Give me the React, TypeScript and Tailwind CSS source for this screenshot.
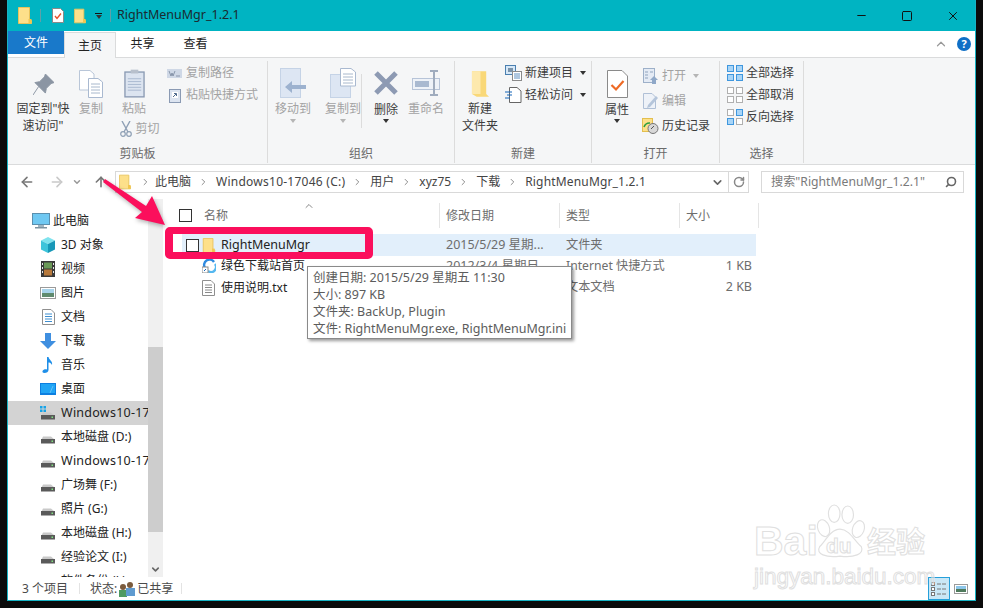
import React from 'react';
import { ChevronDown, ChevronUp, ArrowLeft, ArrowRight, ArrowUp, RotateCw, Search, Minus, Square, X } from 'lucide-react';

const Folder = ({ className = 'w-[14px] h-[17px]' }: { className?: string }) => (
  <svg viewBox="0 0 14 17" className={className}>
    <path d="M0.5 0.5H11.5V13.5H13.5V16.5H0.5Z" fill="#fde08a" stroke="#e8c35a" />
    <rect x="10.5" y="12" width="3" height="4.5" fill="#f2c64e" />
  </svg>
);

const Drive = ({ win }: { win?: boolean }) => (
  <svg viewBox="0 0 16 14" className="w-4 h-[14px] shrink-0">
    {win && (
      <g fill="#16a3e8">
        <rect x="0" y="0" width="2.5" height="2.5" />
        <rect x="3.5" y="0" width="2.5" height="2.5" />
        <rect x="0" y="3.5" width="2.5" height="2.5" />
        <rect x="3.5" y="3.5" width="2.5" height="2.5" />
      </g>
    )}
    <path d="M3 6.5H11L14.5 9.5H1.5Z" fill="#c9c9c9" />
    <rect x="1" y="9" width="14" height="4.5" fill="#5a5a5a" />
    <rect x="11.5" y="10.5" width="1.5" height="1.5" fill="#7fe07f" />
  </svg>
);

const PcIcon = () => (
  <svg viewBox="0 0 18 16" className="w-[18px] h-4 shrink-0">
    <rect x="0.5" y="0.5" width="17" height="11" fill="#6fc8f2" stroke="#5a8fae" />
    <rect x="6" y="12" width="6" height="2" fill="#9fb4c0" />
    <rect x="3" y="14" width="12" height="1.5" fill="#7c93a1" />
  </svg>
);

const CubeIcon = () => (
  <svg viewBox="0 0 16 16" className="w-4 h-4 shrink-0">
    <path d="M8 0L15 3.5L8 7L1 3.5Z" fill="#7fe3ee" />
    <path d="M1 3.5L8 7V16L1 12.5Z" fill="#3ec4da" />
    <path d="M15 3.5L8 7V16L15 12.5Z" fill="#1898b8" />
  </svg>
);

const VideoIcon = () => (
  <svg viewBox="0 0 14 16" className="w-4 h-4 shrink-0">
    <rect x="0" y="0" width="14" height="16" fill="#3a3a3a" />
    <rect x="3" y="1.5" width="8" height="6" fill="#6b9a58" />
    <rect x="3" y="8.5" width="8" height="6" fill="#b7793c" />
    <g fill="#e8e8e8">
      <rect x="1" y="2" width="1" height="2" />
      <rect x="1" y="6" width="1" height="2" />
      <rect x="1" y="10" width="1" height="2" />
      <rect x="12" y="2" width="1" height="2" />
      <rect x="12" y="6" width="1" height="2" />
      <rect x="12" y="10" width="1" height="2" />
    </g>
  </svg>
);

const PicIcon = () => (
  <svg viewBox="0 0 16 12" className="w-4 h-3 shrink-0">
    <rect x="0.5" y="0.5" width="15" height="11" fill="#fff" stroke="#9a9a9a" />
    <rect x="2" y="2" width="12" height="4" fill="#a7d3ea" />
    <rect x="2" y="6" width="12" height="4" fill="#5f8a6e" />
  </svg>
);

const DocIcon = ({ lines = '#8a8a8a' }: { lines?: string }) => (
  <svg viewBox="0 0 13 16" className="w-[13px] h-4 shrink-0">
    <path d="M0.5 0.5H9L12.5 4V15.5H0.5Z" fill="#fff" stroke="#8f8f8f" />
    <path d="M3 5H10M3 7.5H10M3 10H10M3 12.5H10" stroke={lines} />
  </svg>
);

const DownIcon = () => (
  <svg viewBox="0 0 16 16" className="w-4 h-4 shrink-0">
    <path d="M5 0H11V8H16L8 16L0 8H5Z" fill="#3f8fe0" />
  </svg>
);

const NoteIcon = () => (
  <svg viewBox="0 0 12 16" className="w-4 h-4 shrink-0">
    <path d="M5 0H6.5C7 3 11 4 10 8C9 6 7.5 5.5 6.5 5.5V13C6.5 15 4.5 16 2.5 16C0.5 16 0 14.5 0.8 13.5C2 12 4 12 5 12.5Z" fill="#1f8fe8" />
  </svg>
);

const DesktopIcon = () => (
  <svg viewBox="0 0 16 12" className="w-4 h-3 shrink-0">
    <rect x="0" y="0" width="16" height="12" fill="#0d7fe0" />
    <rect x="1" y="1" width="14" height="9" fill="#21a5f5" />
    <path d="M10 10L13 3" stroke="#8fd3fa" strokeWidth="0.6" />
  </svg>
);

const Grid = ({ on }: { on: boolean[] }) => (
  <svg viewBox="0 0 16 16" className="w-4 h-4 shrink-0">
    {[[0, 0], [9, 0], [0, 9], [9, 9]].map(([x, y], i) => (
      <rect
        key={i}
        x={x + 0.5}
        y={y + 0.5}
        width="6"
        height="6"
        fill={on[i] ? '#a9d5f7' : '#fff'}
        stroke={on[i] ? '#3f97de' : '#b0b0b0'}
      />
    ))}
  </svg>
);

const Caret = ({ gray }: { gray?: boolean }) => (
  <span className={`inline-block border-x-[3.5px] border-t-[4px] border-x-transparent ${gray ? 'border-t-[#b5b5b5]' : 'border-t-[#333]'}`} />
);

const BigBtn = ({ w, icon, label, gray, caret, low }: { w: string; icon: React.ReactNode; label: React.ReactNode; gray?: boolean; caret?: boolean; low?: boolean }) => (
  <div className={`flex flex-col items-center shrink-0 ${w} ${gray ? 'text-[#a3a3a3]' : 'text-[#3c3c3c]'}`}>
    <div className="h-[33px] flex items-end justify-center">{icon}</div>
    <div className={`text-center leading-[17px] ${low ? 'mt-[3px]' : 'mt-[2px]'}`}>{label}</div>
    {caret && <div className={`leading-none flex items-center ${low ? 'h-[6px]' : 'h-2'}`}><Caret gray={gray} /></div>}
  </div>
);

const SmallBtn = ({ icon, label, gray, caret }: { icon: React.ReactNode; label: string; gray?: boolean; caret?: boolean }) => (
  <div className={`flex items-center gap-[3px] h-[22px] whitespace-nowrap ${gray ? 'text-[#a3a3a3]' : 'text-[#3c3c3c]'}`}>
    <span className="w-[17px] flex justify-center shrink-0">{icon}</span>
    <span>{label}</span>
    {caret && <span className="ml-[4px] flex"><Caret gray={gray} /></span>}
  </div>
);

const Group = ({ w, label, children }: { w: string; label: string; children: React.ReactNode }) => (
  <div className={`${w} shrink-0 h-[102px] my-[3px] border-r border-[#dcdcdc] flex flex-col`}>
    <div className="h-[84px] flex pt-[4px]">{children}</div>
    <div className="text-center text-[#6a6a6a] leading-[16px] mt-[1px]">{label}</div>
  </div>
);

const navItems: { icon: React.ReactNode; label: string; sel?: boolean; wide?: boolean }[] = [
  { icon: <CubeIcon />, label: '3D 对象' },
  { icon: <VideoIcon />, label: '视频' },
  { icon: <PicIcon />, label: '图片' },
  { icon: <DocIcon lines="#3f8fd0" />, label: '文档' },
  { icon: <DownIcon />, label: '下载' },
  { icon: <NoteIcon />, label: '音乐' },
  { icon: <DesktopIcon />, label: '桌面' },
  { icon: <Drive win />, label: 'Windows10-17046 (C:)', sel: true, wide: true },
  { icon: <Drive />, label: '本地磁盘 (D:)' },
  { icon: <Drive />, label: 'Windows10-17046 (E:)', wide: true },
  { icon: <Drive />, label: '广场舞 (F:)' },
  { icon: <Drive />, label: '照片 (G:)' },
  { icon: <Drive />, label: '本地磁盘 (H:)' },
  { icon: <Drive />, label: '经验论文 (I:)' },
  { icon: <Drive />, label: '软件备份 (J:)' },
];

const CrumbSep = () => (
  <svg viewBox="0 0 6 8" className="w-[5px] h-2 mx-[10px] shrink-0"><path d="M1 0.5L4.5 4L1 7.5" fill="none" stroke="#777" /></svg>
);

const Crumb = ({ children, wide }: { children: string; wide?: boolean }) => (
  <>
    <span className={`text-[#444] ${wide ? 'tracking-[0.25px]' : ''}`}>{children}</span>
    <CrumbSep />
  </>
);

const Cols = ({ name, date, type, size }: { name: React.ReactNode; date?: string; type?: string; size?: string }) => (
  <>
    <div className="w-[258px] shrink-0 flex items-center">{name}</div>
    <div className="w-[120px] shrink-0 pl-[6px] text-[12.5px] text-[#6d6d6d] whitespace-nowrap overflow-hidden">{date}</div>
    <div className="w-[120px] shrink-0 pl-[6px] text-[12.2px] text-[#6d6d6d] whitespace-nowrap">{type}</div>
    <div className="w-[76px] shrink-0 pr-[4px] text-[12.5px] text-right text-[#6d6d6d]">{size}</div>
  </>
);

export default function App() {
  return (
    <div className="relative w-[983px] h-[608px] overflow-hidden bg-[#0b0b0b] pl-[7px] font-['Noto_Sans','Noto_Sans_CJK_SC',sans-serif] text-[12px] text-[#222]">
      <div className="w-[969px] h-[601px] border-x border-b border-[#17b3c4] bg-white flex flex-col">
        {/* Title bar */}
        <div className="h-[31px] shrink-0 bg-[#00b4c2] flex items-center pl-[10px] text-[#1b2a30]">
          <Folder />
          <span className="w-px h-[13px] bg-[#5fa0a8] ml-[8px] mr-[11px]" />
          <svg viewBox="0 0 12 15" className="w-3 h-[15px]">
            <path d="M0.5 0.5H8.5L11.5 3.5V14.5H0.5Z" fill="#fff" stroke="#8a8a8a" />
            <path d="M3 8L5 10.5L9 5.5" fill="none" stroke="#e8502a" strokeWidth="1.4" />
          </svg>
          <span className="ml-[10px]"><Folder className="w-3 h-4" /></span>
          <span className="ml-[9px] flex flex-col items-center gap-[1px]">
            <span className="w-[7px] h-px bg-[#111]" />
            <Caret />
          </span>
          <span className="w-px h-[13px] bg-[#5fa0a8] ml-[8px] mr-[6px]" />
          <span className="text-[12.5px]">RightMenuMgr_1.2.1</span>
          <div className="ml-auto flex items-center text-[#111]">
            <Minus size={13} strokeWidth={1} absoluteStrokeWidth className="mr-[33px]" />
            <Square size={12} strokeWidth={1} absoluteStrokeWidth className="mr-[33px]" />
            <X size={14} strokeWidth={1} absoluteStrokeWidth className="mr-[15px]" />
          </div>
        </div>

        {/* Tabs */}
        <div className="h-[26px] shrink-0 flex items-stretch relative">
          <div className="w-[56px] h-[23px] bg-[#1979ca] text-white flex items-center justify-center">文件</div>
          <div className="w-[52px] h-[26px] mt-[1px] z-10 bg-[#f5f6f7] border-x border-t border-[#dadbdc] flex items-center justify-center">主页</div>
          <div className="w-[53px] flex items-center justify-center">共享</div>
          <div className="w-[53px] flex items-center justify-center">查看</div>
          <div className="ml-auto flex items-center gap-[9px] pr-[4px]">
            <ChevronUp size={14} strokeWidth={1.2} absoluteStrokeWidth className="text-[#999]" />
            <span className="w-[14px] h-[14px] rounded-full bg-[#0f6fc6] text-white font-bold text-[11px] flex items-center justify-center">?</span>
          </div>
        </div>

        {/* Ribbon */}
        <div className="h-[108px] shrink-0 bg-[#f5f6f7] border-y border-[#dadbdc] flex whitespace-nowrap">
          <Group w="w-[260px]" label="剪贴板">
            <BigBtn
              w="w-[70px]"
              label={<>固定到"快<br />速访问"</>}
              icon={
                <svg viewBox="0 0 22 22" className="w-[21px] h-[21px] mb-[3px]">
                  <path d="M13 0L22 9L19 10L14 15L13 20L2 9L7 8L12 3Z M6 13L0 22" fill="#8b95a3" stroke="#8b95a3" />
                </svg>
              }
            />
            <div className="w-[36px] shrink-0 -ml-[5px]">
              <BigBtn
                w="w-[36px]"
                gray
                label="复制"
                icon={
                  <svg viewBox="0 0 24 28" className="w-6 h-[28px]">
                    <path d="M0.5 0.5H11L15 4V20H0.5Z" fill="#fff" stroke="#b9c6d8" />
                    <path d="M9.5 8.5H19L23.5 12V27.5H9.5Z" fill="#fff" stroke="#a9b9d0" />
                    <path d="M12 14H21M12 17H21M12 20H21M12 23H21" stroke="#a8b8cc" />
                  </svg>
                }
              />
            </div>
            <div className="w-[48px] shrink-0 ml-[1px] flex flex-col items-center text-[#a3a3a3]">
              <BigBtn
                w="w-[48px]"
                gray
                label="粘贴"
                icon={
                  <svg viewBox="0 0 22 30" className="w-[21px] h-[29px]">
                    <rect x="1" y="3" width="20" height="26" fill="#dce4f0" stroke="#8a9ab3" strokeWidth="1.4" />
                    <rect x="7" y="0.5" width="8" height="4" fill="#b8c0cc" />
                    <path d="M4 10H18M4 13H18M4 16H18M4 19H18M4 22H18" stroke="#a9b9d0" />
                  </svg>
                }
              />
              <div className="flex items-center gap-[4px] mt-[3px] ml-[11px] h-[18px]">
                <svg viewBox="0 0 12 16" className="w-3 h-4 shrink-0">
                  <path d="M2 0L8 11M10 0L4 11" stroke="#8fa0b5" strokeWidth="1.4" />
                  <circle cx="3" cy="13" r="2.3" fill="none" stroke="#8fa0b5" strokeWidth="1.2" />
                  <circle cx="9" cy="13" r="2.3" fill="none" stroke="#8fa0b5" strokeWidth="1.2" />
                </svg>
                <span>剪切</span>
              </div>
            </div>
            <div className="ml-[8px] -mt-[3px] flex flex-col">
              <SmallBtn
                gray
                label="复制路径"
                icon={
                  <svg viewBox="0 0 15 9" className="w-[15px] h-[9px]">
                    <rect x="0" y="0" width="15" height="9" fill="#cfd8e6" />
                    <path d="M2 2L4 7L5 4L6 7L8 2M9 7H13" stroke="#6a7a90" strokeWidth="0.7" fill="none" />
                  </svg>
                }
              />
              <SmallBtn
                gray
                label="粘贴快捷方式"
                icon={
                  <svg viewBox="0 0 12 15" className="w-3 h-[15px]">
                    <rect x="0.5" y="1.5" width="11" height="13" fill="#dce4f0" stroke="#8a9ab3" />
                    <rect x="3" y="4" width="6" height="6" fill="#fff" />
                    <path d="M4 9L7 6M5 5.5H7.5V8" stroke="#4f6a8c" fill="none" />
                  </svg>
                }
              />
            </div>
          </Group>

          <Group w="w-[187px]" label="组织">
            <div className="w-[5px] shrink-0" />
            <BigBtn
              w="w-[40px]"
              gray
              caret
              label="移动到"
              icon={
                <svg viewBox="0 0 26 30" className="w-[26px] h-[30px]">
                  <rect x="0.5" y="0.5" width="20" height="29" fill="#dde6f3" stroke="#c5d3e6" />
                  <path d="M5 19L12 13V17H26V21H12V25Z" fill="#9db2cf" />
                </svg>
              }
            />
            <div className="w-[10px] shrink-0" />
            <BigBtn
              w="w-[40px]"
              gray
              caret
              label="复制到"
              icon={
                <svg viewBox="0 0 26 30" className="w-[26px] h-[30px]">
                  <rect x="0.5" y="6.5" width="20" height="23" fill="#dde6f3" stroke="#c5d3e6" />
                  <path d="M10.5 0.5H21L25.5 4V18H10.5Z" fill="#fff" stroke="#a9b9d0" />
                  <path d="M13 6H23M13 9H23M13 12H23M13 15H23" stroke="#a8b8cc" />
                </svg>
              }
            />
            <div className="w-px h-[54px] bg-[#dcdcdc] mt-[9px] -ml-[2px] mr-[6px]" />
            <BigBtn
              w="w-[36px]"
              caret
              low
              label="删除"
              icon={
                <svg viewBox="0 0 26 26" className="w-[26px] h-[26px] mb-[2px]">
                  <path d="M3 3L23 23M23 3L3 23" stroke="#8d9ab3" strokeWidth="5" />
                </svg>
              }
            />
            <BigBtn
              w="w-[44px]"
              gray
              label="重命名"
              icon={
                <svg viewBox="0 0 28 26" className="w-7 h-[26px] mb-[2px]">
                  <rect x="0.5" y="8.5" width="27" height="11" fill="#eef2f8" stroke="#b7c4d8" />
                  <rect x="3" y="11" width="14" height="6" fill="#a9b9d0" />
                  <path d="M18 1H26M22 1V25M18 25H26" stroke="#a0acbe" strokeWidth="2" fill="none" />
                </svg>
              }
            />
          </Group>

          <Group w="w-[137px]" label="新建">
            <BigBtn
              w="w-[50px]"
              label={<>新建<br />文件夹</>}
              icon={
                <svg viewBox="0 0 20 28" className="w-[19px] h-[27px]">
                  <path d="M1 0H16V24L19 27H6L1 24Z" fill="#f9d878" />
                  <path d="M1 0H10V24L1 24Z" fill="#fde9ad" />
                </svg>
              }
            />
            <div className="-mt-[3px] flex flex-col">
              <SmallBtn
                caret
                label="新建项目"
                icon={
                  <svg viewBox="0 0 17 16" className="w-[17px] h-4">
                    <rect x="0.5" y="0.5" width="10" height="9" fill="#d6e8f8" stroke="#4a7fb0" />
                    <rect x="3" y="3" width="5" height="4" fill="#7a93aa" />
                    <rect x="7.5" y="6.5" width="9" height="9" fill="#fff" stroke="#8a8a8a" />
                    <path d="M9 9H15M9 11H15M9 13H15" stroke="#5f8fc0" />
                  </svg>
                }
              />
              <SmallBtn
                caret
                label="轻松访问"
                icon={
                  <svg viewBox="0 0 17 16" className="w-[17px] h-4">
                    <path d="M4.5 0.5H12L16 4V15.5H4.5Z" fill="#fff" stroke="#666" />
                    <path d="M0 5H7M2 8H7M0 11H5" stroke="#1565b8" strokeWidth="1.2" />
                  </svg>
                }
              />
            </div>
          </Group>

          <Group w="w-[128px]" label="打开">
            <BigBtn
              w="w-[50px]"
              caret
              low
              label="属性"
              icon={
                <svg viewBox="0 0 21 28" className="w-[21px] h-[28px]">
                  <path d="M0.5 0.5H15L20.5 6V27.5H0.5Z" fill="#fff" stroke="#8a8a8a" />
                  <path d="M4.5 15L9 19.5L16.5 11" fill="none" stroke="#ee6a25" strokeWidth="2.2" />
                </svg>
              }
            />
            <div className="-mt-[2px] flex flex-col">
              <div className="h-[25px] flex items-center">
                <SmallBtn
                  gray
                  caret
                  label="打开"
                  icon={
                    <svg viewBox="0 0 15 16" className="w-[15px] h-4">
                      <rect x="0.5" y="0.5" width="11" height="14" fill="#e4ebf5" stroke="#9db0c9" />
                      <path d="M2 4H5M7 4H10M2 7H5M2 10H5" stroke="#8fa3bd" />
                      <path d="M11 8L15 12H13V16H9V12H7Z" fill="#8fa8c8" />
                    </svg>
                  }
                />
              </div>
              <div className="h-[25px] flex items-center">
                <SmallBtn
                  gray
                  label="编辑"
                  icon={
                    <svg viewBox="0 0 15 16" className="w-[15px] h-4">
                      <path d="M0.5 0.5H9L12.5 4V15.5H0.5Z" fill="#eef2f8" stroke="#b0c0d6" />
                      <path d="M5 12L13 3L15 5L7 14L4 15Z" fill="#b5c5da" />
                    </svg>
                  }
                />
              </div>
              <div className="h-[25px] flex items-center">
                <SmallBtn
                  label="历史记录"
                  icon={
                    <svg viewBox="0 0 17 16" className="w-[17px] h-4">
                      <rect x="0.5" y="0.5" width="10" height="13" fill="#fde08a" stroke="#e3bf4f" />
                      <circle cx="11" cy="10.5" r="5" fill="#d8d8d8" stroke="#777" />
                      <path d="M2 9A6 6 0 0 1 8 5" fill="none" stroke="#2e9e3f" strokeWidth="1.6" />
                      <path d="M9 11L12 8" stroke="#555" />
                    </svg>
                  }
                />
              </div>
            </div>
          </Group>

          <Group w="w-[84px]" label="选择">
            <div className="ml-[6px] -mt-[3px] flex flex-col">
              <SmallBtn label="全部选择" icon={<Grid on={[true, true, true, true]} />} />
              <SmallBtn label="全部取消" icon={<Grid on={[false, false, false, false]} />} />
              <SmallBtn label="反向选择" icon={<Grid on={[false, true, true, false]} />} />
            </div>
          </Group>
        </div>

        {/* Address bar */}
        <div className="h-[34px] shrink-0 flex items-center whitespace-nowrap">
          <div className="w-[107px] shrink-0 flex items-center pl-[11px]">
            <ArrowLeft size={16} strokeWidth={1.6} absoluteStrokeWidth className="text-[#777]" />
            <ArrowRight size={16} strokeWidth={1.6} absoluteStrokeWidth className="ml-[14px] text-[#c9c9c9]" />
            <ChevronDown size={10} strokeWidth={1.5} absoluteStrokeWidth className="ml-[7px] text-[#999]" />
            <ArrowUp size={16} strokeWidth={1.6} absoluteStrokeWidth className="ml-[11px] text-[#777]" />
          </div>
          <div className="w-[634px] h-[22px] shrink-0 border border-[#d9d9d9] flex items-center">
            <div className="pl-[3px] w-[24px] shrink-0"><Folder className="w-3 h-4" /></div>
            <svg viewBox="0 0 6 8" className="w-[5px] h-2 ml-[3px] mr-[7px] shrink-0"><path d="M1 0.5L4.5 4L1 7.5" fill="none" stroke="#777" /></svg>
            <Crumb>此电脑</Crumb>
            <Crumb wide>Windows10-17046 (C:)</Crumb>
            <Crumb>用户</Crumb>
            <Crumb>xyz75</Crumb>
            <Crumb>下载</Crumb>
            <span className="text-[#444] tracking-[0.17px]">RightMenuMgr_1.2.1</span>
            <ChevronDown size={13} strokeWidth={1.6} absoluteStrokeWidth className="ml-auto mr-[4px] text-[#666]" />
            <div className="w-[20px] h-full border-l border-[#d9d9d9] flex items-center justify-center">
              <RotateCw size={12} strokeWidth={1.5} absoluteStrokeWidth className="text-[#888]" />
            </div>
          </div>
          <div className="ml-[12px] w-[203px] h-[22px] shrink-0 border border-[#d9d9d9] flex items-center pl-[9px] pr-[6px] text-[12.2px] text-[#7a7a7a]">
            <span>搜索"RightMenuMgr_1.2.1"</span>
            <Search size={12} strokeWidth={1.6} absoluteStrokeWidth className="ml-auto text-[#666] -scale-x-100" />
          </div>
        </div>

        {/* Main */}
        <div className="flex-1 min-h-0 flex">
          <div className="w-[140px] shrink-0 overflow-hidden whitespace-nowrap pt-[10px]">
            <div className="h-[24px] flex items-center pl-[24px] gap-[3px]">
              <PcIcon />
              <span>此电脑</span>
            </div>
            {navItems.map((it, i) => (
              <div key={i} className={`h-[24px] flex items-center pl-[32px] ${it.sel ? 'bg-[#d3d3d3]' : ''}`}>
                <span className="w-[16px] flex justify-center shrink-0">{it.icon}</span>
                <span className={`ml-[5px] ${it.wide ? 'text-[12.5px] tracking-[0.25px]' : ''}`}>{it.label}</span>
              </div>
            ))}
          </div>

          {/* Scrollbar */}
          <div className="w-[15px] shrink-0 bg-[#f0f0f0] flex flex-col">
            <div className="h-[148px]" />
            <div className="h-[185px] bg-[#cdcdcd]" />
            <div className="flex-1 flex items-end justify-center pb-[2px]">
              <ChevronDown size={11} strokeWidth={1.6} absoluteStrokeWidth className="text-[#666]" />
            </div>
          </div>

          {/* File list */}
          <div className="flex-1 min-w-0 pl-[3px] pt-[4px] whitespace-nowrap">
            <div className="h-[25px] flex items-center text-[#6d6d6d]">
              <div className="w-[273px] shrink-0 flex items-center pl-[13px] relative">
                <span className="w-[13px] h-[13px] border border-[#333] bg-white" />
                <span className="ml-[12px]">名称</span>
                <ChevronUp size={12} strokeWidth={1} absoluteStrokeWidth className="absolute left-[137px] -top-[7px] text-[#888]" />
              </div>
              <div className="w-[120px] h-full shrink-0 pl-[6px] border-l border-[#e5e5e5] flex items-center">修改日期</div>
              <div className="w-[120px] h-full shrink-0 pl-[6px] border-l border-[#e5e5e5] flex items-center">类型</div>
              <div className="w-[80px] h-full shrink-0 pl-[6px] border-x border-[#e5e5e5] flex items-center">大小</div>
            </div>
            <div className="ml-[16px] mt-[6px] w-[574px] h-[22px] bg-[#e2effb] flex items-center">
              <Cols
                name={
                  <>
                    <span className="ml-[4px] w-[13px] h-[13px] border border-[#333] bg-white shrink-0" />
                    <span className="ml-[3px] flex"><Folder className="w-[14px] h-[15px]" /></span>
                    <span className="ml-[5px] text-[12.5px] text-[#222]">RightMenuMgr</span>
                  </>
                }
                date="2015/5/29 星期..."
                type="文件夹"
              />
            </div>
            <div className="ml-[16px] w-[574px] h-[20px] flex items-center">
              <Cols
                name={
                  <>
                    <svg viewBox="0 0 14 14" className="ml-[20px] w-[14px] h-[14px] shrink-0">
                      <path d="M3 9A5 5 0 0 1 12 3" fill="none" stroke="#2f8ae0" strokeWidth="2.4" />
                      <path d="M13 5A5 5 0 0 1 6 12" fill="none" stroke="#55b8f0" strokeWidth="2.4" />
                      <rect x="0" y="8" width="6" height="6" fill="#fff" stroke="#8a8a8a" />
                      <path d="M2 12L4 10" stroke="#1565b8" />
                    </svg>
                    <span className="ml-[5px]">绿色下载站首页</span>
                  </>
                }
                date="2012/3/4 星期日..."
                type="Internet 快捷方式"
                size="1 KB"
              />
            </div>
            <div className="ml-[16px] mt-px w-[574px] h-[21px] flex items-center">
              <Cols
                name={
                  <>
                    <span className="ml-[20px] flex"><DocIcon /></span>
                    <span className="ml-[6px]">使用说明.txt</span>
                  </>
                }
                type="文本文档"
                size="2 KB"
              />
            </div>
          </div>
        </div>

        {/* Status bar */}
        <div className="h-[23px] shrink-0 flex items-center text-[#4a4a4a] relative whitespace-nowrap bg-white">
          <span className="ml-[14px] w-[57px]">3 个项目</span>
          <span className="w-px h-[11px] bg-[#e3e3e3]" />
          <span className="ml-[10px]">状态:</span>
          <svg viewBox="0 0 17 16" className="w-[17px] h-4 ml-[1px] shrink-0">
            <circle cx="5" cy="6" r="3" fill="#7a5a3c" />
            <rect x="1" y="9" width="8" height="7" fill="#4f9a62" />
            <circle cx="12" cy="4" r="3" fill="#7a5a3c" />
            <rect x="8" y="7" width="9" height="8" fill="#5f9bd0" />
          </svg>
          <span className="ml-[2px]">已共享</span>
          <span className="ml-[8px] w-px h-[11px] bg-[#e3e3e3]" />
          <div className="ml-auto flex items-center pr-[7px]">
            <div className="w-[22px] h-[23px] bg-[#c9e7f6] border border-[#26a0da] flex items-center justify-center">
              <svg viewBox="0 0 16 14" className="w-4 h-[14px]">
                <g fill="#fff" stroke="#777">
                  <rect x="0.5" y="0.5" width="3" height="3" />
                  <rect x="0.5" y="5.5" width="3" height="3" />
                  <rect x="0.5" y="10.5" width="3" height="3" />
                </g>
                <path d="M6 2H10M11 2H15M6 7H10M11 7H15M6 12H10M11 12H15" stroke="#777" />
              </svg>
            </div>
            <svg viewBox="0 0 14 10" className="w-[14px] h-[10px] ml-[4px]">
              <rect x="0.5" y="0.5" width="13" height="9" fill="#fff" stroke="#9a9a9a" />
              <rect x="2" y="2" width="10" height="3" fill="#8cc6ea" />
              <rect x="2" y="5" width="10" height="3" fill="#4f7a5c" />
            </svg>
          </div>
        </div>
      </div>

      {/* Tooltip */}
      <div className="absolute left-[307px] top-[266px] w-[265px] h-[73px] bg-white border border-[#8a8a8a] shadow-[2px_2px_3px_rgba(0,0,0,0.4)] pl-[5px] pt-[2px] text-[12.5px] text-[#5c5c5c] leading-[17px] whitespace-nowrap">
        <div>创建日期: 2015/5/29 星期五 11:30</div>
        <div>大小: 897 KB</div>
        <div>文件夹: BackUp, Plugin</div>
        <div>文件: RightMenuMgr.exe, RightMenuMgr.ini</div>
      </div>

      {/* Red annotation box */}
      <div className="absolute left-[165px] top-[227px] w-[208px] h-[32px] border-y-[7px] border-x-[8px] border-[#fb0f5c] rounded-[5px]" />

      {/* Annotation arrow */}
      <svg viewBox="0 0 983 608" className="absolute left-0 top-0 w-[983px] h-[608px] pointer-events-none">
        <path d="M105 179L146 206L152 196L165 225L135 218L142 212L103 182Z" fill="#fb0f5c" style={{ filter: 'drop-shadow(1px 2px 2px rgba(0,0,0,0.3))' }} />
      </svg>

      {/* Watermark */}
      <div className="absolute left-[754px] top-[503px] w-[180px] h-[88px] pointer-events-none select-none text-transparent [-webkit-text-stroke:1px_#e0e0e0] font-['Liberation_Sans','Noto_Sans_CJK_SC',sans-serif] font-bold">
        <div className="flex items-end h-[58px]">
          <span className="w-[59px] shrink-0 text-[41px] leading-[40px]">Bai</span>
          <div className="relative w-[54px] h-[58px] shrink-0">
            <svg viewBox="0 0 56 58" className="absolute inset-0 w-full h-full" fill="none" stroke="#e0e0e0" strokeWidth="1.2">
              <ellipse cx="11" cy="25" rx="6" ry="9" transform="rotate(-20 11 25)" />
              <ellipse cx="22" cy="10" rx="6" ry="9" />
              <ellipse cx="36" cy="11" rx="6" ry="9" />
              <ellipse cx="47" cy="26" rx="6" ry="9" transform="rotate(20 47 26)" />
              <path d="M28 26C38 26 44 40 50 44C54 52 42 56 28 54C14 56 2 52 7 44C12 40 18 26 28 26Z" />
            </svg>
            <span className="absolute left-[13px] top-[32px] text-[21px] leading-[22px]">du</span>
          </div>
          <span className="text-[29px] leading-[36px]">经验</span>
        </div>
        <div className="mt-[3px] text-[22.5px] leading-[26px] font-normal">jingyan.baidu.com</div>
      </div>
    </div>
  );
}
